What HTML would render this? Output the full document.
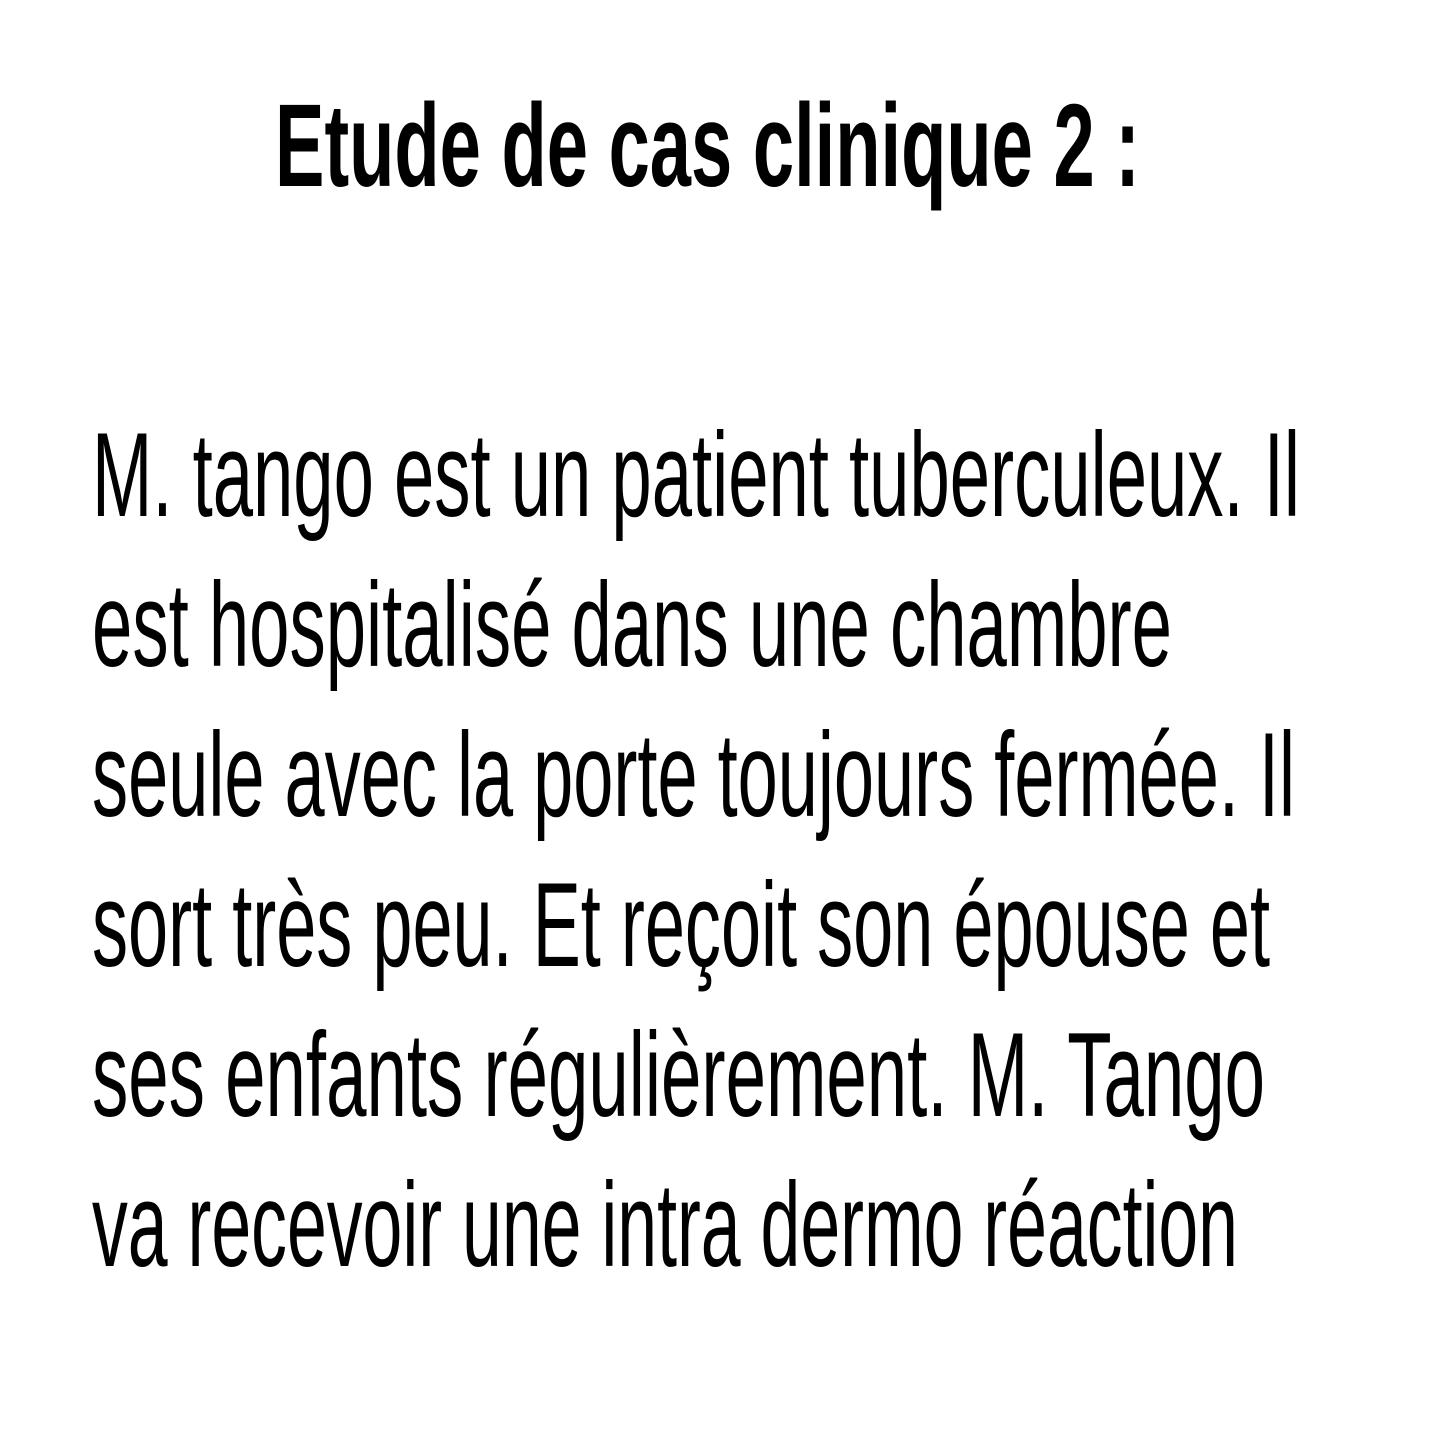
<!DOCTYPE html>
<html><head><meta charset="utf-8">
<style>
html,body{margin:0;padding:0;background:#fff;}
body{width:1440px;height:1440px;position:relative;overflow:hidden;font-family:"Liberation Sans Narrow","Liberation Sans",sans-serif;color:#000;}
.l{position:absolute;white-space:nowrap;transform-origin:0 0;line-height:1;}
.t{font-weight:bold;font-size:118px;}
.b{font-size:120px;}
</style></head><body>
<div class="l t" data-x="275" data-w="865" data-base="187">Etude de cas clinique 2 :</div>
<div class="l b" data-x="92" data-w="1208" data-base="517">M. tango est un patient tuberculeux. Il</div>
<div class="l b" data-x="92" data-w="1080" data-base="667">est hospitalisé dans une chambre</div>
<div class="l b" data-x="92" data-w="1203" data-base="817">seule avec la porte toujours fermée. Il</div>
<div class="l b" data-x="92" data-w="1178" data-base="967">sort très peu. Et reçoit son épouse et</div>
<div class="l b" data-x="92" data-w="1173" data-base="1117">ses enfants régulièrement. M. Tango</div>
<div class="l b" data-x="92" data-w="1146" data-base="1267">va recevoir une intra dermo réaction</div>
<script>
document.querySelectorAll('.l').forEach(function(e){
  var fs=parseFloat(getComputedStyle(e).fontSize);
  var w=e.getBoundingClientRect().width;
  var s=parseFloat(e.dataset.w)/w;
  e.style.left=e.dataset.x+'px';
  // baseline approx at 0.905*fs for Liberation with line-height 1 (ascent .905, descent .212 -> centered)
  var top=parseFloat(e.dataset.base)-fs*0.85;
  e.style.top=top+'px';
  e.style.transform='scaleX('+s+')';
});
</script>
</body></html>
